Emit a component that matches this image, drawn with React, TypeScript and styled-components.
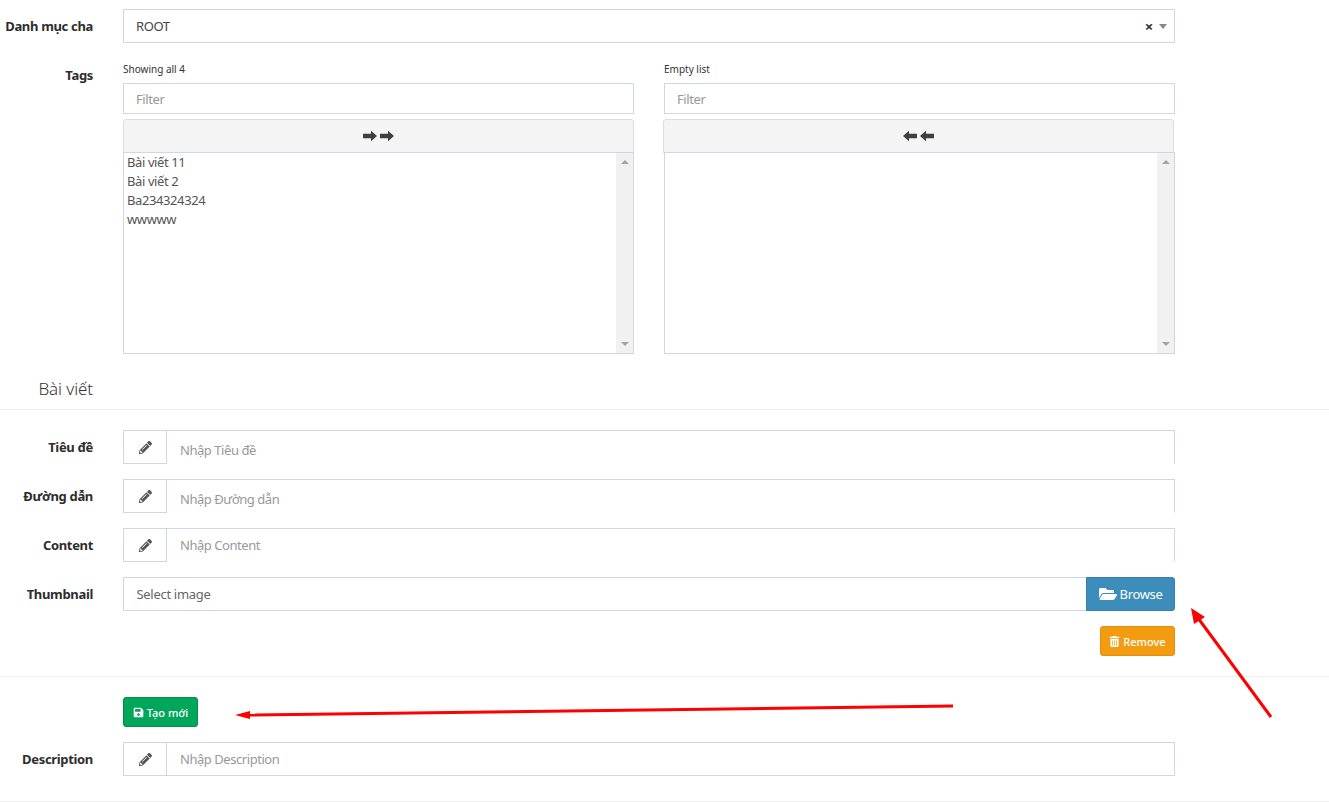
import React from 'react';
import styled, { createGlobalStyle } from 'styled-components';
import { FaPencilAlt, FaFolderOpen, FaTrashAlt, FaSave } from 'react-icons/fa';

const FONT = `'Noto Sans', 'Open Sans', sans-serif`;
const BORDER = '#d2d6de';

const GlobalStyle = createGlobalStyle`
  html, body {
    margin: 0;
    background: #fff;
    color: #333;
    font-family: ${FONT};
    font-size: 13px;
    letter-spacing: -0.4px;
    overflow: hidden;
  }
  * { box-sizing: border-box; }
`;

function ArrowGlyph({ flip }: { flip?: boolean }) {
  return (
    <svg width="14" height="12" viewBox="0 0 14 12" style={flip ? { transform: 'scaleX(-1)' } : undefined}>
      <path d="M0 3.8h8V.8L14 6l-6 5.2v-3H0z" fill="#3f3f3f" />
    </svg>
  );
}

function Annotations() {
  return (
    <Overlay width="1329" height="804" viewBox="0 0 1329 804">
      <path d="M1271 717L1198 618" stroke="#f00" strokeWidth="3" fill="none" />
      <path d="M1191 608l3 16 11-7z" fill="#f00" />
      <path d="M953 706L248 715" stroke="#f00" strokeWidth="3" fill="none" />
      <path d="M235 715l15-4v8z" fill="#f00" />
    </Overlay>
  );
}

function DualColumn({ caption, lines, flip }: { caption: string; lines: string[]; flip?: boolean }) {
  return (
    <Column>
      <Caption>{caption}</Caption>
      <FilterInput placeholder="Filter" />
      <MoveButton $shift={flip}>
        <ArrowGlyph flip={flip} />
        <ArrowGlyph flip={flip} />
      </MoveButton>
      <ListBox>
        <ListItems>
          {lines.map((line) => (
            <ListItem key={line}>{line}</ListItem>
          ))}
        </ListItems>
        <ScrollTrack>
          <ScrollUp />
          <ScrollDown />
        </ScrollTrack>
      </ListBox>
    </Column>
  );
}

type TextRowProps = {
  label: string;
  placeholder: string;
  open?: boolean;
  drop?: number;
};

function TextRow({ label, placeholder, open, drop = 0 }: TextRowProps) {
  return (
    <Row>
      <Label>{label}</Label>
      <InputGroup>
        <Addon>
          <FaPencilAlt size={13} color="#555" />
        </Addon>
        <GroupInput $open={open} $drop={drop} placeholder={placeholder} />
      </InputGroup>
    </Row>
  );
}

export default function App() {
  return (
    <Page>
      <GlobalStyle />
      <Row>
        <Label>Danh mục cha</Label>
        <SelectBox>
          <span>ROOT</span>
          <SelectControls>
            <ClearMark>×</ClearMark>
            <Caret />
          </SelectControls>
        </SelectBox>
      </Row>
      <Row>
        <Label>Tags</Label>
        <DualGrid>
          <DualColumn
            caption="Showing all 4"
            lines={['Bài viết 11', 'Bài viết 2', 'Ba234324324', 'wwwww']}
          />
          <DualColumn caption="Empty list" lines={[]} flip />
        </DualGrid>
      </Row>
      <SectionHead>
        <SectionTitle>Bài viết</SectionTitle>
      </SectionHead>
      <Divider />
      <Section>
        <TextRow label="Tiêu đề" placeholder="Nhập Tiêu đề" open drop={6} />
        <TextRow label="Đường dẫn" placeholder="Nhập Đường dẫn" open drop={6} />
        <TextRow label="Content" placeholder="Nhập Content" open />
        <Row>
          <Label>Thumbnail</Label>
          <InputGroup>
            <FileInput placeholder="Select image" />
            <BrowseButton>
              <FaFolderOpen size={18} />
              Browse
            </BrowseButton>
          </InputGroup>
        </Row>
        <RemoveRow>
          <SmallButton $bg="#f39c12" $edge="#e08e0b">
            <FaTrashAlt size={11} />
            Remove
          </SmallButton>
        </RemoveRow>
      </Section>
      <Divider />
      <Section>
        <Row>
          <span />
          <ButtonCell>
            <SmallButton $bg="#00a65a" $edge="#008d4c">
              <FaSave size={11} />
              Tạo mới
            </SmallButton>
          </ButtonCell>
        </Row>
        <TextRow label="Description" placeholder="Nhập Description" />
      </Section>
      <LastDivider />
      <Annotations />
    </Page>
  );
}

const Page = styled.div`
  position: relative;
  width: 1329px;
  height: 804px;
  padding-top: 9px;
  overflow: hidden;
`;

const Overlay = styled.svg`
  position: absolute;
  top: 0;
  left: 0;
  pointer-events: none;
`;

const Row = styled.div`
  display: grid;
  grid-template-columns: 93px 1052px;
  column-gap: 30px;
  margin-bottom: 15px;
`;

const Label = styled.label`
  padding-top: 7px;
  line-height: 20px;
  text-align: right;
  font-weight: 700;
  letter-spacing: -0.33px;
  white-space: nowrap;
  color: #2d2d2d;
`;

const SelectBox = styled.div`
  display: flex;
  align-items: center;
  justify-content: space-between;
  height: 34px;
  padding: 0 7px 0 12px;
  border: 1px solid ${BORDER};
  color: #444;
`;

const SelectControls = styled.div`
  display: flex;
  align-items: center;
  gap: 6px;
`;

const ClearMark = styled.span`
  font-weight: 700;
  font-size: 15px;
  line-height: 15px;
  color: #333;
`;

const Caret = styled.span`
  width: 0;
  height: 0;
  border-left: 4.5px solid transparent;
  border-right: 4.5px solid transparent;
  border-top: 5px solid #888;
`;

const DualGrid = styled.div`
  display: grid;
  grid-template-columns: 511px 511px;
  column-gap: 30px;
`;

const Column = styled.div`
  display: flex;
  flex-direction: column;
`;

const Caption = styled.div`
  height: 25px;
  padding-top: 4px;
  font-size: 10px;
  line-height: 14px;
  letter-spacing: 0;
  color: #333;
`;

const FilterInput = styled.input`
  height: 31px;
  padding: 0 12px;
  border: 1px solid ${BORDER};
  border-radius: 0;
  outline: none;
  font: 13px ${FONT};
  letter-spacing: -0.4px;

  &::placeholder {
    color: #999;
    opacity: 1;
  }
`;

const MoveButton = styled.button<{ $shift?: boolean }>`
  display: flex;
  align-items: center;
  justify-content: center;
  gap: 3px;
  height: 34px;
  margin: 5px 0 -1px ${(p) => (p.$shift ? '-1px' : '0')};
  width: 511px;
  padding: 0;
  background: #f4f4f4;
  border: 1px solid #ddd;
  border-radius: 3px 3px 0 0;
`;

const ListBox = styled.div`
  position: relative;
  display: flex;
  height: 202px;
  background: #fff;
  border: 1px solid ${BORDER};
`;

const ListItems = styled.div`
  flex: 1;
  padding: 0 3px;
`;

const ListItem = styled.div`
  height: 19px;
  line-height: 19px;
  color: #555;
`;

const ScrollTrack = styled.div`
  display: flex;
  flex-direction: column;
  justify-content: space-between;
  align-items: center;
  width: 17px;
  padding: 7px 0;
  background: #f1f1f1;
`;

const ScrollUp = styled.span`
  width: 0;
  height: 0;
  border-left: 4px solid transparent;
  border-right: 4px solid transparent;
  border-bottom: 4px solid #a3a3a3;
`;

const ScrollDown = styled.span`
  width: 0;
  height: 0;
  border-left: 4px solid transparent;
  border-right: 4px solid transparent;
  border-top: 4px solid #a3a3a3;
`;

const SectionHead = styled.div`
  display: grid;
  grid-template-columns: 93px;
  margin-top: -15px;
  height: 55px;
  align-items: end;
  padding-bottom: 8px;
`;

const SectionTitle = styled.h4`
  margin: 0;
  font-size: 17px;
  font-weight: 300;
  line-height: 24px;
  letter-spacing: -0.1px;
  text-align: right;
  white-space: nowrap;
  color: #333;
`;

const Divider = styled.div`
  height: 1px;
  background: #f0f0f0;
`;

const LastDivider = styled(Divider)`
  margin-top: 25px;
`;

const Section = styled.div`
  padding-top: 20px;
`;

const InputGroup = styled.div`
  display: flex;
  height: 34px;
`;

const Addon = styled.div`
  display: flex;
  align-items: center;
  justify-content: center;
  flex: 0 0 44px;
  border: 1px solid ${BORDER};
`;

const GroupInput = styled.input<{ $open?: boolean; $drop: number }>`
  flex: 1;
  min-width: 0;
  padding: ${(p) => p.$drop}px 13px 0;
  border: 1px solid ${BORDER};
  border-left: 0;
  border-bottom-color: ${(p) => (p.$open ? 'transparent' : BORDER)};
  border-radius: 0;
  outline: none;
  font: 13px ${FONT};
  letter-spacing: -0.45px;

  &::placeholder {
    color: #999;
    opacity: 1;
  }
`;

const FileInput = styled.input`
  flex: 1;
  min-width: 0;
  padding: 0 12.5px;
  border: 1px solid ${BORDER};
  border-right: 0;
  border-radius: 0;
  outline: none;
  font: 13px ${FONT};
  letter-spacing: -0.3px;

  &::placeholder {
    color: #666;
    opacity: 1;
  }
`;

const BrowseButton = styled.button`
  display: flex;
  align-items: center;
  justify-content: center;
  gap: 3px;
  flex: 0 0 89px;
  padding: 0;
  background: #3c8dbc;
  border: 1px solid #367fa9;
  border-radius: 0 3px 3px 0;
  color: #fff;
  font: 13px ${FONT};
  letter-spacing: -0.35px;
`;

const RemoveRow = styled.div`
  display: flex;
  justify-content: flex-end;
  width: 1175px;
  margin-bottom: 20px;
`;

const ButtonCell = styled.div`
  display: flex;
`;

const SmallButton = styled.button<{ $bg: string; $edge: string }>`
  display: flex;
  align-items: center;
  justify-content: center;
  gap: 3px;
  width: 75px;
  height: 30px;
  padding: 0;
  background: ${(p) => p.$bg};
  border: 1px solid ${(p) => p.$edge};
  border-radius: 3px;
  color: #fff;
  font: 500 11px ${FONT};
`;
